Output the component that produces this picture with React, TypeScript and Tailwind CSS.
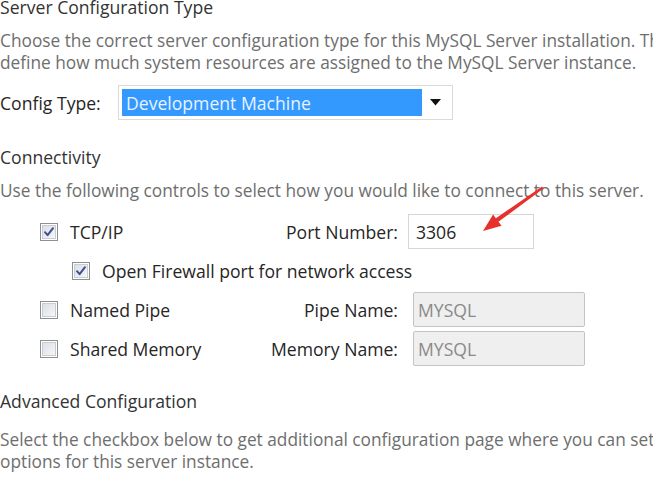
import React from "react";

const font = { fontFamily: '"Open Sans", "Noto Sans", sans-serif' };

function Check({ checked }: { checked: boolean }) {
  return (
    <div className="flex h-[18px] w-[18px] shrink-0 items-center justify-center border border-[#8e8f8f] bg-white">
      <div className="flex h-[14px] w-[14px] items-center justify-center border border-[#c9ccd4] bg-gradient-to-br from-[#dcdfe6] to-[#f6f6f8]">
        {checked && (
          <svg width="12" height="12" viewBox="0 0 12 12">
            <path d="M2 6.2 L4.6 9.2 L10 2.2" fill="none" stroke="#3d4f93" strokeWidth="2" strokeLinecap="round" strokeLinejoin="round" />
          </svg>
        )}
      </div>
    </div>
  );
}

type RowProps = {
  indent: string;
  checked: boolean;
  label: string;
  field?: string;
  value?: string;
  disabled?: boolean;
};

function Row({ indent, checked, label, field, value, disabled }: RowProps) {
  return (
    <div className="flex h-[39px] items-center whitespace-nowrap">
      <div className={`flex min-w-[250px] items-center gap-[12px] ${indent}`}>
        <Check checked={checked} />
        <span className="text-[#262626]">{label}</span>
      </div>
      {field && <div className="w-[148px] text-right text-[#262626]">{field}</div>}
      {field && disabled && (
        <div className="ml-[15px] flex h-[35px] w-[172px] items-center rounded-[2px] border border-[#c4c4c4] bg-[#efefef] px-[4px] text-[#8a8a8a]">
          {value}
        </div>
      )}
      {field && !disabled && (
        <div className="ml-[10px] flex h-[35px] w-[126px] items-center border border-[#d6d6d6] bg-white px-[7px] text-[#262626]">
          {value}
        </div>
      )}
    </div>
  );
}

export default function App() {
  return (
    <div className="relative h-[478px] w-[653px] overflow-hidden bg-white text-[17.6px] leading-[22px]" style={font}>
      <div className="-mt-[4px] flex flex-col">
        <div className="whitespace-nowrap text-[#333]">Server Configuration Type</div>
        <div className="mt-[12px] whitespace-nowrap text-[17.3px] text-[#6e6e6e]">
          <div>Choose the correct server configuration type for this MySQL Server installation. This setting will</div>
          <div>define how much system resources are assigned to the MySQL Server instance.</div>
        </div>

        <div className="mt-[11px] flex h-[35px] items-center">
          <span className="w-[118px] text-[#262626]">Config Type:</span>
          <div className="flex h-[35px] w-[335px] items-center border border-[#dadada] bg-white p-[3px]">
            <div className="flex h-full w-[300px] items-center bg-[#3399ff] px-[4px] text-[#e8f3ff]">Development Machine</div>
            <div className="flex flex-1 items-center justify-center">
              <svg width="11" height="7" viewBox="0 0 11 7">
                <path d="M0 0 H11 L5.5 6.5 Z" fill="#111" />
              </svg>
            </div>
          </div>
        </div>

        <div className="mt-[26px] text-[#333]">Connectivity</div>
        <div className="mt-[12px] whitespace-nowrap text-[17.3px] text-[#6e6e6e]">
          Use the following controls to select how you would like to connect to this server.
        </div>

        <div className="mt-[10px] flex flex-col">
          <Row indent="pl-[40px]" checked label="TCP/IP" field="Port Number:" value="3306" />
          <Row indent="pl-[72px]" checked label="Open Firewall port for network access" />
          <Row indent="pl-[40px]" checked={false} label="Named Pipe" field="Pipe Name:" value="MYSQL" disabled />
          <Row indent="pl-[40px]" checked={false} label="Shared Memory" field="Memory Name:" value="MYSQL" disabled />
        </div>

        <div className="mt-[22px] text-[#333]">Advanced Configuration</div>
        <div className="mt-[17px] whitespace-nowrap text-[17.3px] text-[#6e6e6e]">
          <div>Select the checkbox below to get additional configuration page where you can set advanced</div>
          <div>options for this server instance.</div>
        </div>
      </div>

      <svg className="absolute left-0 top-0" width="653" height="478" viewBox="0 0 653 478">
        <path d="M542 186.5 L543.5 188.5 L498 222 L495.5 218.5 Z" fill="#e8302c" />
        <polygon points="483,231 501.5,225.7 493.1,214.5" fill="#e8302c" />
      </svg>
    </div>
  );
}
